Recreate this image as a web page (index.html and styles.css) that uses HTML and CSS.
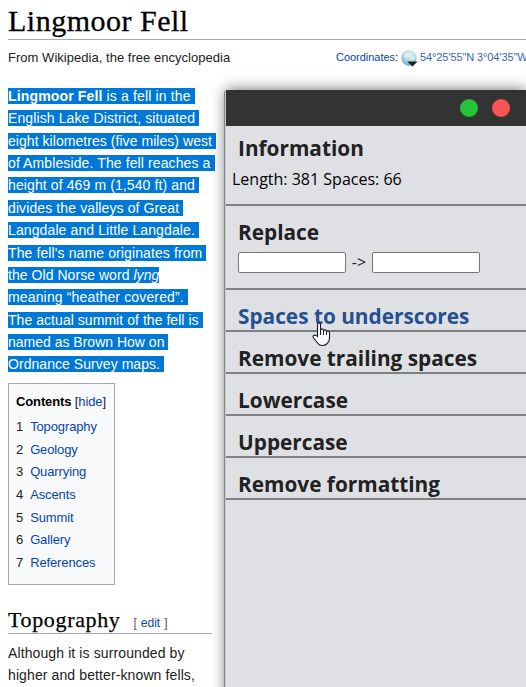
FILE: index.html
```html
<!DOCTYPE html>
<html lang="en">
<head>
<meta charset="utf-8">
<title>Lingmoor Fell</title>
<link rel="stylesheet" href="styles.css">
</head>
<body>
<main class="article">
  <h1 class="title"><span>Lingmoor Fell</span></h1>
  <div class="subline">
    <span class="tagline">From Wikipedia, the free encyclopedia</span>
    <span class="coords"><a>Coordinates</a>:
      <svg class="globe" width="17" height="17" viewBox="0 0 17 17"><defs><radialGradient id="g" cx=".55" cy=".3" r=".7"><stop offset="0" stop-color="#e2f5f8"/><stop offset=".6" stop-color="#a9d6e4"/><stop offset="1" stop-color="#73a9c6"/></radialGradient></defs><circle cx="8" cy="8" r="7.7" fill="url(#g)"/><path d="M3 4l4-2 2 2-2 3-3 1zM9 8l4-2 1 3-4 2z" fill="#dcf1ee" opacity=".8"/><path d="M6 11.5h10.6L11.5 16.6z" fill="#222"/></svg>
      <a class="geo">54°25'55"N 3°04'35"W</a></span>
  </div>
  <div class="column">
    <p class="intro">
      <span class="line wider"><mark><b>Lingmoor Fell</b> is a fell in the </mark></span>
      <span class="line wide"><mark>English Lake District, situated </mark></span>
      <span class="line snug"><mark>eight kilometres (five miles) west </mark></span>
      <span class="line wide"><mark>of Ambleside. The fell reaches a </mark></span>
      <span class="line wide"><mark>height of 469 m (1,540 ft) and </mark></span>
      <span class="line wide"><mark>divides the valleys of Great </mark></span>
      <span class="line wide"><mark>Langdale and Little Langdale. </mark></span>
      <span class="line wide"><mark>The fell's name originates from </mark></span>
      <span class="line snug"><mark>the Old Norse word <i>lyng</i></mark></span>
      <span class="line wider"><mark>meaning “heather covered”. </mark></span>
      <span class="line snug"><mark>The actual summit of the fell is </mark></span>
      <span class="line"><mark>named as Brown How on </mark></span>
      <span class="line snug"><mark>Ordnance Survey maps. </mark></span>
    </p>
    <nav class="toc">
      <div class="toc-title"><b>Contents</b> [<a>hide</a>]</div>
      <ul>
        <li><span>1</span><a>Topography</a></li>
        <li><span>2</span><a>Geology</a></li>
        <li><span>3</span><a>Quarrying</a></li>
        <li><span>4</span><a>Ascents</a></li>
        <li><span>5</span><a>Summit</a></li>
        <li><span>6</span><a>Gallery</a></li>
        <li><span>7</span><a>References</a></li>
      </ul>
    </nav>
    <h2 class="section"><span class="name">Topography</span><span class="edit"><i>[</i><a>edit</a><i>]</i></span></h2>
    <p class="text">Although it is surrounded by<br>higher and better-known fells,</p>
  </div>
</main>
<aside class="panel">
  <header class="bar"><span class="dot green"></span><span class="dot red"></span></header>
  <section class="info"><h3>Information</h3><p><span>Length: 381 Spaces: 66</span></p></section>
  <section class="replace"><h3>Replace</h3><div class="fields"><input type="text"><span>-&gt;</span><input type="text"></div></section>
  <section class="action active"><h3>Spaces to underscores</h3></section>
  <section class="action"><h3>Remove trailing spaces</h3></section>
  <section class="action"><h3>Lowercase</h3></section>
  <section class="action"><h3>Uppercase</h3></section>
  <section class="action"><h3>Remove formatting</h3></section>
</aside>
<svg class="cursor" width="19" height="25" viewBox="0 0 19 25"><path d="M5.5 14.5V2.8Q5.5 1 7 1T8.5 2.8V8Q8.8 6.9 10 6.9T11.5 8.3V9Q11.8 7.9 13 7.9T14.5 9.2V10Q14.8 8.9 16 9T17.5 10.5V16Q17.4 19 15.6 21.2Q13.8 23.5 10.5 23.5T6 21.5L1.4 15.8Q.6 14.5 1.5 13.6T3.8 13.4z" fill="#fff" stroke="#15152a" stroke-width="1.1"/><path d="M8.5 8v5M11.5 9v4M14.5 10v3" stroke="#15152a" fill="none"/></svg>
</body>
</html>
```
FILE: styles.css
```css
* { box-sizing: border-box; }
body {
  margin: 0;
  height: 687px;
  overflow: hidden;
  background: #fff;
  color: #202122;
  font: 14px/22.4px "Liberation Sans", Arial, sans-serif;
}
h1, h2, h3, p, ul { margin: 0; padding: 0; font-weight: normal; }
a { color: #0645ad; }
.article { padding-left: 8px; }
.title {
  height: 40px;
  border-bottom: 1px solid #a2a9b1;
  color: #000;
  font: 30px/40px "Liberation Serif", serif;
  letter-spacing: 0.5px;
  -webkit-text-stroke: 0.3px #000;
  padding-top: 1px;
}
.subline { display: flex; justify-content: space-between; height: 44.8px; padding-top: 7px; white-space: nowrap; }
.tagline { font-size: 13px; letter-spacing: 0.03px; }
.coords { display: flex; align-items: center; height: 20px; width: 190px; font-size: 11px; line-height: 20px; letter-spacing: -0.03px; }
.globe { margin: 2px 2px 0 3px; flex: none; }
.geo { color: #3366bb; letter-spacing: -0.1px; }
.column { width: 204px; }
.line { display: block; white-space: pre; height: 22.4px; }
.snug { letter-spacing: 0.05px; }
.wide { letter-spacing: 0.11px; }
.wider { letter-spacing: 0.15px; }
mark { background: #0078d7; color: #fff; }
.toc {
  width: 107px;
  height: 202px;
  margin-top: 7px;
  padding: 7px;
  border: 1px solid #a2a9b1;
  background: #f8f9fa;
  font-size: 13px;
  letter-spacing: -0.12px;
  white-space: nowrap;
}
.toc-title b { color: #000; }
.toc ul { list-style: none; margin-top: 3px; }
.toc li { display: flex; gap: 7px; height: 22.6px; line-height: 22.6px; }
.section {
  display: flex;
  align-items: baseline;
  height: 30px;
  margin-top: 19px;
  border-bottom: 1px solid #a2a9b1;
  color: #000;
  font: 22px/32px "Liberation Serif", serif;
}
.name { letter-spacing: 0.65px; -webkit-text-stroke: 0.25px #000; }
.edit { display: flex; gap: 4px; margin-left: 13px; color: #54595d; font: 12px/20px "Liberation Sans", sans-serif; }
.edit i { font-style: normal; }
.text { margin-top: 8px; white-space: nowrap; letter-spacing: 0.11px; }
.panel {
  position: absolute;
  left: 226px;
  top: 90px;
  width: 300px;
  height: 610px;
  background: #dfe0e4;
  box-shadow: -1px 1px 0 #c4c7cc, -2px 1px 0 #83878c, 0 0 14px rgba(0, 0, 0, 0.6);
  font-family: "Open Sans", "Noto Sans", sans-serif;
}
.bar { display: flex; justify-content: flex-end; gap: 14px; height: 36px; padding: 9px 16px 0 0; background: #333; }
.dot { width: 18px; height: 18px; border-radius: 50%; }
.green { background: #26c238; }
.red { background: #fc5454; }
.panel section { border-bottom: 2px solid #808080; }
.panel h3 { padding-left: 12px; color: #222; font-size: 20.8px; font-weight: 700; line-height: 28px; white-space: nowrap; }
.info { height: 80px; padding-top: 8px; }
.info p { padding-left: 6px; color: #000; font-size: 16px; line-height: 24px; margin-top: 5px; }
.replace { height: 84px; padding-top: 12px; }
.fields { display: flex; align-items: center; padding-left: 12px; margin-top: 6px; color: #222; font-size: 16px; line-height: 21px; }
.fields input { width: 108px; height: 21px; margin: 0; border: 1px solid #767676; border-radius: 2px; background: #fff; }
.fields span { width: 26px; text-align: center; }
.action { height: 42px; padding-top: 12px; }
.panel .active h3 { color: #235091; }
.cursor { position: absolute; left: 312px; top: 322px; }
```
